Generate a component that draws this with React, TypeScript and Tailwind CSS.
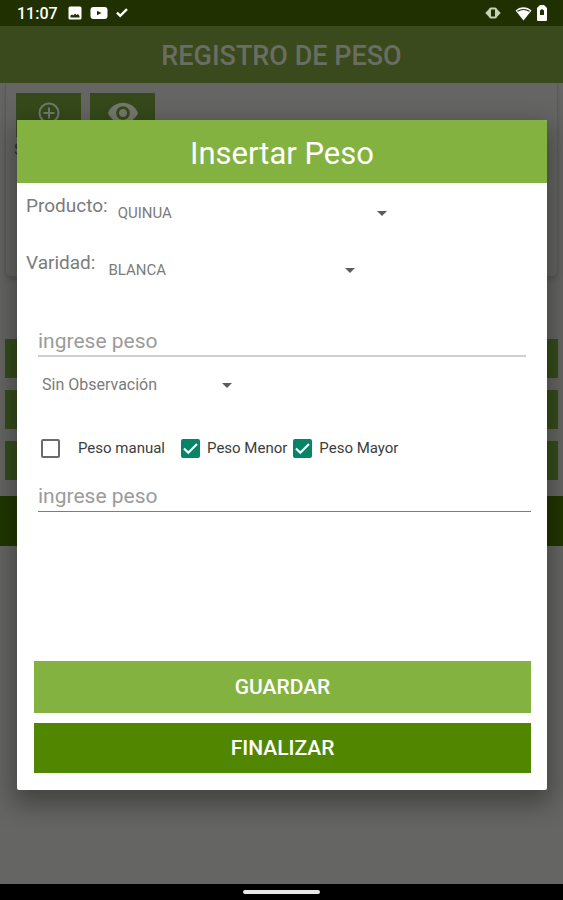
import { useState } from "react";

const Dropdown = ({
  id,
  label,
  options,
  className,
}: {
  id: string;
  label: string;
  options: string[];
  className: string;
}) => {
  return (
    <div className={`relative flex items-center ${className}`}>
      <select
        id={id}
        aria-label={label}
        className="w-full appearance-none bg-transparent text-[#7b7b7b] outline-none"
      >
        {options.map((option) => (
          <option key={option}>{option}</option>
        ))}
      </select>
      <svg
        viewBox="0 0 10 5"
        className="absolute right-0 w-[10px] h-[5px] pointer-events-none"
      >
        <path d="M0 0h10L5 5z" fill="#5c5c5c" />
      </svg>
    </div>
  );
};

const CheckBox = ({
  label,
  initial,
  className,
}: {
  label: string;
  initial: boolean;
  className: string;
}) => {
  const [checked, setChecked] = useState(initial);

  return (
    <label className={`flex items-center text-[15px] leading-5 ${className}`}>
      <span className="relative flex">
        <input
          type="checkbox"
          checked={checked}
          onChange={() => setChecked(!checked)}
          className="appearance-none w-[19px] h-[19px] rounded-xs border-2 border-[#6b6b6b] checked:bg-[#078468] checked:border-[#078468]"
        />
        {checked && (
          <svg
            viewBox="0 0 19 19"
            className="absolute inset-0 w-full h-full pointer-events-none"
          >
            <path
              d="M3 9.5l4.3 4.3L16 5"
              fill="none"
              stroke="#fff"
              strokeWidth="2.2"
            />
          </svg>
        )}
      </span>
      {label}
    </label>
  );
};

const StatusBar = () => {
  return (
    <div className="flex items-center h-[26px] pl-[17px] pr-4 bg-[#213000] text-white">
      <span className="pt-px text-base leading-5 font-medium">11:07</span>
      <svg viewBox="0 0 14 14" className="ml-[10px] w-[14px] h-[14px]">
        <rect x="0.5" y="0.5" width="13" height="13" rx="1.5" fill="#fff" />
        <path d="M2.5 11.5v-2l1.500-1 1.500 1 1.500-2 1.500 1.500 1.500-1 1.500 2v1.500z" fill="#213000" />
      </svg>
      <svg viewBox="0 0 18 14" className="ml-2 w-[18px] h-[14px]">
        <rect x="0.5" y="1" width="17" height="12" rx="3" fill="#fff" />
        <path d="M7 4.8v4.4L11.5 7z" fill="#213000" />
      </svg>
      <svg viewBox="0 0 12 10" className="ml-2 w-3 h-[10px]">
        <path d="M1 4.6l3.2 3.2L11 1.2" fill="none" stroke="#fff" strokeWidth="2.4" />
      </svg>
      <svg viewBox="0 0 16 12" className="ml-auto w-4 h-3">
        <path d="M4.5 1.5v9L0.3 6z" fill="#c3d3b4" />
        <path d="M11.5 1.5v9L15.7 6z" fill="#c3d3b4" />
        <rect x="5" y="1.5" width="6" height="9" rx="1" fill="#213000" stroke="#c3d3b4" strokeWidth="2" />
      </svg>
      <svg viewBox="0 0 17 15" className="ml-[14px] w-[17px] h-[15px]">
        <path d="M0.5 4.6C5 0 12 0 16.5 4.6L8.5 14.5z" fill="#fff" />
        <path d="M2.500 5.300C6 3 11 3 14.500 5.300" fill="none" stroke="#213000" strokeWidth="1.200" />
      </svg>
      <svg viewBox="0 0 10 16" className="ml-[5px] w-[10px] h-4">
        <path d="M3 0h4l3 3v12a1 1 0 0 1-1 1H1a1 1 0 0 1-1-1V3z" fill="#fff" />
        <path d="M3 5.500l2-1.500 2 1.500V10H3z" fill="#213000" />
      </svg>
    </div>
  );
};

const Background = () => {
  return (
    <>
      <header className="flex items-center justify-center h-[57px] pt-[3px] bg-[#3b4a1c]">
        <h1 className="text-[27px] leading-8 font-medium text-[#6a6d63]">
          REGISTRO DE PESO
        </h1>
      </header>
      <main className="bg-[#656563]">
        <section className="mx-[5px] h-[194px] px-2 pt-[10px] rounded-b-md border-x border-b border-[#5b5a5b] shadow-md">
          <div className="flex gap-[9px] ml-[2px]">
            <button
              aria-label="Agregar"
              className="flex justify-center w-[65px] h-11 pt-[9px] bg-[#35491a]"
            >
              <svg viewBox="0 0 22 22" className="w-[22px] h-[22px]">
                <circle cx="11" cy="11" r="9.5" fill="none" stroke="#74796c" strokeWidth="2" />
                <path d="M11 5.5v11M5.5 11h11" stroke="#74796c" strokeWidth="2" />
              </svg>
            </button>
            <button
              aria-label="Ver"
              className="flex justify-center w-[65px] h-11 pt-[9px] bg-[#35491a]"
            >
              <svg viewBox="1 4.5 22 15" className="w-[30px] h-[22px]">
                <path
                  d="M12 4.5C7 4.5 2.73 7.61 1 12c1.73 4.39 6 7.5 11 7.5s9.27-3.11 11-7.5c-1.73-4.39-6-7.5-11-7.5zM12 17c-2.76 0-5-2.24-5-5s2.24-5 5-5 5 2.24 5 5-2.24 5-5 5zm0-8c-1.66 0-3 1.34-3 3s1.340 3 3 3 3-1.340 3-3-1.340-3-3-3z"
                  fill="#74796c"
                />
              </svg>
            </button>
          </div>
          <p className="mt-[5px] text-base leading-4 text-[#2d2d2d]">S</p>
        </section>
        <div className="flex flex-col gap-3 mx-[5px] mt-[62px]">
          <div className="h-[39px] bg-[#354d1a]"></div>
          <div className="h-[39px] bg-[#354d1a]"></div>
          <div className="h-[39px] bg-[#354d1a]"></div>
        </div>
        <div className="mt-4 h-[50px] bg-[#213600]"></div>
      </main>
    </>
  );
};

const InsertDialog = () => {
  return (
    <div
      role="dialog"
      aria-labelledby="dialog-title"
      className="rounded-xs bg-white shadow-[0_10px_26px_4px_rgba(0,0,0,0.35)] overflow-hidden"
    >
      <h2
        id="dialog-title"
        className="h-[63px] pt-[14px] bg-[#84b241] text-center text-[31px] leading-10 text-white"
      >
        Insertar Peso
      </h2>
      <form onSubmit={(e) => e.preventDefault()} className="pb-[17px]">
        <div className="flex items-start pl-[9px] pt-[11px]">
          <label htmlFor="producto" className="text-[19px] leading-6 text-[#7b7b7b]">
            Producto:
          </label>
          <Dropdown
            id="producto"
            label="Producto"
            options={["QUINUA"]}
            className="ml-[10px] mt-[9px] w-[269px] text-[15px] leading-5"
          />
        </div>
        <div className="flex items-start pl-[9px] mt-[28px]">
          <label htmlFor="varidad" className="text-[19px] leading-6 text-[#7b7b7b]">
            Varidad:
          </label>
          <Dropdown
            id="varidad"
            label="Varidad"
            options={["BLANCA"]}
            className="ml-[13px] mt-[9px] w-[247px] text-[15px] leading-5"
          />
        </div>
        <div className="mt-[46px] mx-[21px]">
          <input
            aria-label="Peso"
            placeholder="ingrese peso"
            className="block w-full h-[31px] border-b-2 border-[#cfcfcf] text-[21px] leading-7 placeholder:text-[#9b9b9b] outline-none"
          />
        </div>
        <Dropdown
          id="observacion"
          label="Observación"
          options={["Sin Observación"]}
          className="mt-[18px] ml-[25px] w-[190px] text-base leading-5"
        />
        <div className="flex items-center mt-[43px] ml-6 text-[#3c3c3c]">
          <CheckBox label="Peso manual" initial={false} className="gap-[18px]" />
          <CheckBox label="Peso Menor" initial={true} className="ml-4 gap-[7px]" />
          <CheckBox label="Peso Mayor" initial={true} className="ml-[6px] gap-[7px]" />
        </div>
        <div className="mt-[23px] ml-[21px] mr-4">
          <input
            aria-label="Peso manual"
            placeholder="ingrese peso"
            className="block w-full h-[31px] border-b border-[#7d7d7d] text-[21px] leading-7 placeholder:text-[#9b9b9b] outline-none"
          />
        </div>
        <div className="flex flex-col gap-[10px] mt-[149px] ml-[17px] mr-4 text-[21px] leading-6 font-medium text-white">
          <button type="submit" className="h-[52px] bg-[#84b241]">
            GUARDAR
          </button>
          <button type="button" className="h-[50px] bg-[#518700]">
            FINALIZAR
          </button>
        </div>
      </form>
    </div>
  );
};

export default function App() {
  return (
    <div className="relative flex flex-col min-h-screen bg-[#656563] font-[Roboto,sans-serif]">
      <StatusBar />
      <Background />
      <div className="absolute inset-x-0 top-[120px] pl-[17px] pr-4">
        <InsertDialog />
      </div>
      <footer className="flex items-center justify-center mt-auto h-4 bg-black">
        <div className="w-[77px] h-1 rounded-full bg-[#e8e8e8]"></div>
      </footer>
    </div>
  );
}
